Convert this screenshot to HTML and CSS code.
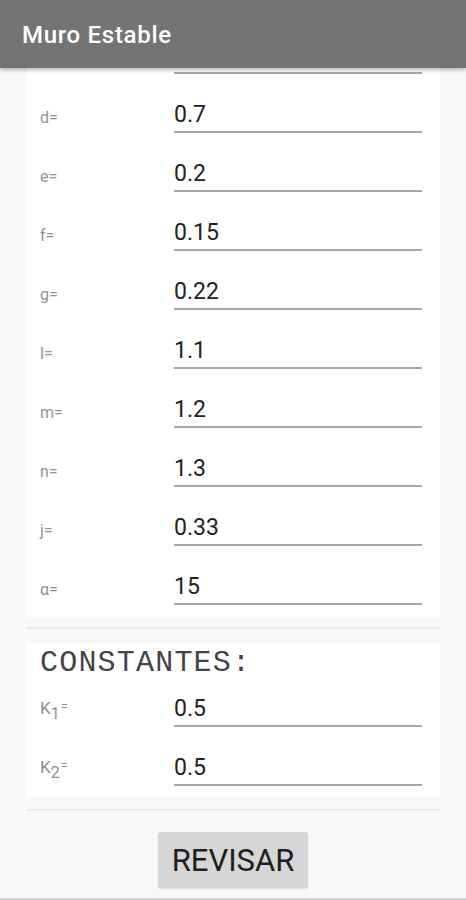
FILE: index.html
```html
<!DOCTYPE html>
<html lang="es">
<head>
<meta charset="utf-8">
<title>Muro Estable</title>
<link rel="stylesheet" href="styles.css">
</head>
<body>
<header class="appbar"><h1 class="appbar-title">Muro Estable</h1></header>
<main class="content">
  <section class="card card-main">
    <div class="row row-cut"><span class="label"></span><span class="field"></span></div>
    <div class="row"><span class="label">d=</span><span class="field">0.7</span></div>
    <div class="row"><span class="label">e=</span><span class="field">0.2</span></div>
    <div class="row"><span class="label">f=</span><span class="field">0.15</span></div>
    <div class="row"><span class="label">g=</span><span class="field">0.22</span></div>
    <div class="row"><span class="label">l=</span><span class="field">1.1</span></div>
    <div class="row"><span class="label">m=</span><span class="field">1.2</span></div>
    <div class="row"><span class="label">n=</span><span class="field">1.3</span></div>
    <div class="row"><span class="label">j=</span><span class="field">0.33</span></div>
    <div class="row"><span class="label">α=</span><span class="field">15</span></div>
  </section>
  <div class="divider"></div>
  <section class="card card-const">
    <h2 class="const-title">CONSTANTES:</h2>
    <div class="row row-first"><span class="label label-k">K<sub>1</sub><span class="eq">=</span></span><span class="field">0.5</span></div>
    <div class="row"><span class="label label-k">K<sub>2</sub><span class="eq">=</span></span><span class="field">0.5</span></div>
  </section>
  <div class="divider divider-low"></div>
  <div class="actions"><button class="btn" type="button">REVISAR</button></div>
</main>
<div class="navline"></div>
</body>
</html>
```
FILE: styles.css
```css
* { box-sizing: border-box; }
html, body { margin: 0; padding: 0; }
body {
  width: 466px;
  height: 900px;
  overflow: hidden;
  background: #f8f8f8;
  font-family: Roboto, "Noto Sans", "Liberation Sans", sans-serif;
  display: flex;
  flex-direction: column;
}
.appbar {
  position: relative;
  z-index: 2;
  height: 68px;
  background: #747474;
  box-shadow: 0 2px 4px rgba(0,0,0,0.28);
  display: flex;
  align-items: center;
  padding-left: 22px;
  flex: none;
}
.appbar-title {
  margin: 0;
  color: #ffffff;
  font-size: 24px;
  font-weight: 500;
  letter-spacing: 0.7px;
  padding-top: 1px;
}
.content {
  display: flex;
  flex-direction: column;
  flex: none;
}
.card {
  background: #ffffff;
  margin: 0 26px;
  padding: 0 18px 0 14px;
}
.card-main { padding-bottom: 12px; }
.card-const { margin-top: 14px; padding-bottom: 11px; }
.row {
  height: 59px;
  display: flex;
  align-items: flex-end;
}
.row-cut { height: 6px; }
.row-cut .field { height: 2px; padding: 0; }
.row-first { height: 52px; }
.label {
  width: 134px;
  flex: none;
  font-size: 16px;
  line-height: 20px;
  padding-bottom: 5px;
  color: #939393;
}
.label-k { font-size: 17px; color: #8e8e8e; padding-bottom: 7px; }
.label-k sub { font-size: 16px; vertical-align: -5px; line-height: 0; }
.label-k .eq { font-size: 13px; margin-left: 1px; position: relative; top: -3px; }
.field {
  width: 248px;
  flex: none;
  font-size: 23px;
  line-height: 28px;
  padding-bottom: 2px;
  color: #222222;
  border-bottom: 2px solid #a6a6a6;
}
.const-title {
  margin: 0;
  height: 32px;
  font-family: "Liberation Mono", "DejaVu Sans Mono", monospace;
  font-weight: normal;
  font-size: 30px;
  letter-spacing: 1.2px;
  line-height: 32px;
  padding-top: 4px;
  color: #444444;
}
.divider {
  height: 2px;
  background: #ebebeb;
  margin: 10px 26px 0;
}
.divider-low { margin-top: 12px; }
.actions {
  display: flex;
  justify-content: center;
  margin-top: 21px;
}
.btn {
  width: 150px;
  height: 56px;
  border: none;
  border-radius: 3px;
  background: #d6d6d6;
  box-shadow: 0 1px 2px rgba(0,0,0,0.12);
  font-family: Roboto, "Liberation Sans", sans-serif;
  font-size: 31px;
  color: #1e1e1e;
  padding: 0;
}
.navline {
  margin-top: auto;
  height: 2px;
  background: #d4d4d4;
  flex: none;
}
```
